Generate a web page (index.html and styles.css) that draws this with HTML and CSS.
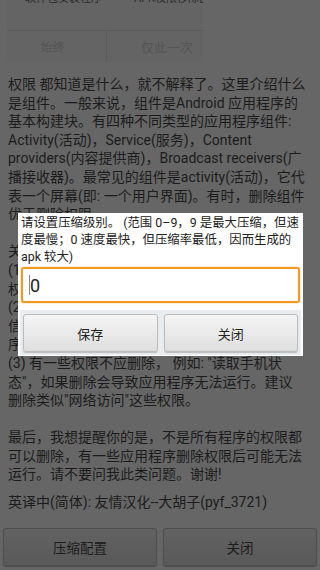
FILE: index.html
```html
<!DOCTYPE html>
<html lang="zh-CN">
<head>
<meta charset="utf-8">
<link rel="stylesheet" href="styles.css">
</head>
<body>
<div class="screen">
  <div class="chooser">
    <div class="chooser-apps"><span class="app app-a">软件包安装程序</span><span class="app app-b">APK权限移除器</span></div>
    <div class="chooser-actions"><div class="act act-always">始终</div><div class="act act-once">仅此一次</div></div>
  </div>

  <div class="article">
    <p class="para">权限 都知道是什么，就不解释了。这里介绍什么<br>是组件。一般来说，组件是Android 应用程序的<br>基本构建块。有四种不同类型的应用程序组件:<br>Activity(活动)，Service(服务)，Content<br>providers(内容提供商)，Broadcast receivers(广<br>播接收器)。最常见的组件是activity(活动)，它代<br>表一个屏幕(即: 一个用户界面)。有时，删除组件<br>优于删除权限。</p>
    <p class="para">关于删除权限的一些说明:<br>(1) 权限名称显示在方括号中，如 "[读取联系人]"<br>权限可以单独删除。<br>(2) 有些权限删除后程序仍<br>信息可能无法正常显示，<br>序仍然可以运行。<br>(3) 有一些权限不应删除， 例如: "读取手机状<br>态"，如果删除会导致应用程序无法运行。建议<br>删除类似"网络访问"这些权限。</p>
    <p class="para">最后，我想提醒你的是，不是所有程序的权限都<br>可以删除，有一些应用程序删除权限后可能无法<br>运行。请不要问我此类问题。谢谢!</p>
    <p class="para credit">英译中(简体): 友情汉化--大胡子(pyf_3721)</p>
  </div>

  <div class="footer">
    <button class="footer-btn">压缩配置</button>
    <button class="footer-btn">关闭</button>
  </div>

  <div class="dialog">
    <p class="dialog-msg">请设置压缩级别。 (范围 0–9，9 是最大压缩，但速<br>度最慢；0 速度最快，但压缩率最低，因而生成的<br>apk 较大)</p>
    <div class="dialog-input"><span class="caret"></span><span class="value">0</span></div>
    <div class="dialog-bar">
      <button class="dialog-btn">保存</button>
      <button class="dialog-btn">关闭</button>
    </div>
  </div>
</div>
</body>
</html>
```

FILE: styles.css
```css
* { box-sizing: border-box; }
html, body { margin: 0; padding: 0; }
body {
  background: #666666;
  font-family: Roboto, "Noto Sans CJK SC", sans-serif;
  color: #1c1c1c;
}
.screen {
  position: relative;
  width: 320px;
  height: 570px;
  overflow: hidden;
  display: flex;
  flex-direction: column;
}

/* faded chooser behind */
.chooser {
  width: 196px;
  margin-left: 7px;
  background: #646464;
}
.chooser-apps {
  height: 31px;
  border-bottom: 1px solid #5b5b5b;
  overflow: hidden;
  display: flex;
  font-size: 11px;
  line-height: 14px;
  color: #2a2a2a;
}
.app { margin-top: -8px; white-space: nowrap; }
.app-a { margin-left: 18px; }
.app-b { margin-left: 32px; }
.chooser-actions {
  display: flex;
  height: 31px;
}
.act {
  display: flex;
  align-items: center;
  justify-content: center;
  font-size: 12px;
  color: #545454;
}
.act-always { width: 99px; padding-right: 8px; }
.act-once { flex: 1; border-left: 1px solid #5b5b5b; padding-left: 24px; font-size: 13px; }

/* article text */
.article {
  padding: 0 8px;
  margin-top: 13px;
}
.para {
  margin: 0 0 18.6px;
  font-size: 14px;
  line-height: 18.6px;
  white-space: nowrap;
}
.para.credit { margin: -10px 0 0; }

/* bottom buttons */
.footer {
  margin-top: auto;
  display: flex;
  gap: 6px;
  padding: 0 3px 4px;
}
.footer-btn {
  flex: 1;
  height: 38px;
  font-family: Roboto, "Noto Sans CJK SC", sans-serif;
  font-size: 13.5px;
  color: #1c1c1c;
  background: linear-gradient(#626262, #595959);
  border: 1px solid #4e4e4e;
  border-radius: 3px;
  box-shadow: 0 1px 1px rgba(0,0,0,0.25);
}

/* dialog */
.dialog {
  position: absolute;
  left: 18px;
  top: 213px;
  width: 285px;
  background: #ffffff;
  padding: 1px 0 1px;
}
.dialog-msg {
  margin: 0;
  padding: 0 3px;
  font-size: 12.4px;
  line-height: 17px;
  color: #222;
  white-space: nowrap;
}
.dialog-input {
  margin: 2px 3px 0;
  height: 36px;
  border: 2px solid #f39a1e;
  border-radius: 3px;
  display: flex;
  align-items: center;
  padding-left: 6px;
  box-shadow: 0 0 2px rgba(243,154,30,0.6);
}
.caret {
  width: 1px;
  height: 20px;
  background: #8a8a8a;
}
.value {
  font-size: 18px;
  color: #222;
  margin-left: 0;
}
.dialog-bar {
  margin: 7px 2px 0;
  background: #e8edf1;
  display: flex;
  gap: 6px;
  padding: 4px 3px 3px;
}
.dialog-btn {
  flex: 1;
  height: 38px;
  font-family: Roboto, "Noto Sans CJK SC", sans-serif;
  font-size: 13px;
  color: #222;
  background: linear-gradient(#f5f5f5, #dedede);
  border: 1px solid #bcbcbc;
  border-radius: 3px;
  box-shadow: 0 1px 1px rgba(0,0,0,0.2);
}
```
